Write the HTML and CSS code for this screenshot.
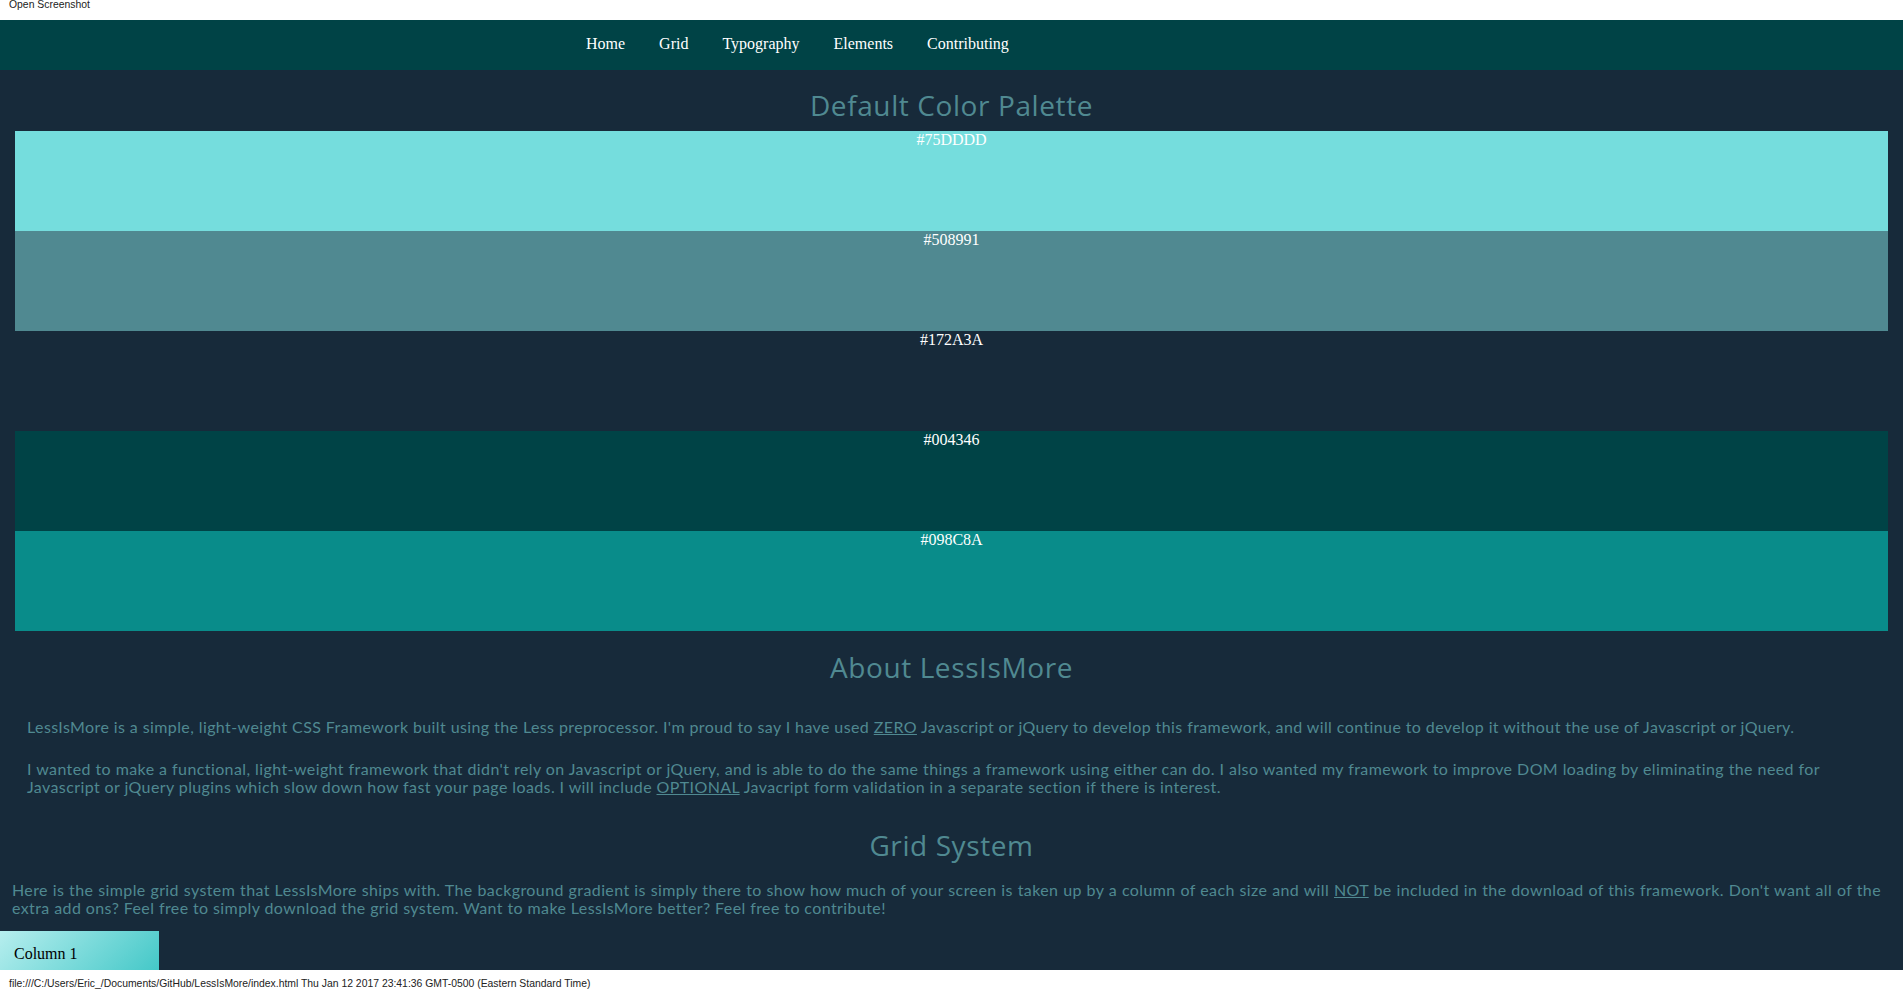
FILE: index.html
```html
<!DOCTYPE html>
<html>
<head>
<meta charset="utf-8">
<title>LessIsMore</title>
<link rel="stylesheet" href="styles.css">
</head>
<body>
<div class="shot-header">Open Screenshot</div>
<div class="page">
  <nav class="nav">
    <ul class="nav-list">
      <li><a href="#">Home</a></li>
      <li><a href="#">Grid</a></li>
      <li><a href="#">Typography</a></li>
      <li><a href="#">Elements</a></li>
      <li><a href="#">Contributing</a></li>
    </ul>
  </nav>
  <h1 class="heading palette-heading">Default Color Palette</h1>
  <div class="palette">
    <div class="swatch sw-1">#75DDDD</div>
    <div class="swatch sw-2">#508991</div>
    <div class="swatch sw-3">#172A3A</div>
    <div class="swatch sw-4">#004346</div>
    <div class="swatch sw-5">#098C8A</div>
  </div>
  <h2 class="heading about-heading">About LessIsMore</h2>
  <div class="about">
    <p>LessIsMore is a simple, light-weight CSS Framework built using the Less preprocessor. I'm proud to say I have used <u>ZERO</u> Javascript or jQuery to develop this framework, and will continue to develop it without the use of Javascript or jQuery.</p>
    <p>I wanted to make a functional, light-weight framework that didn't rely on Javascript or jQuery, and is able to do the same things a framework using either can do. I also wanted my framework to improve DOM loading by eliminating the need for Javascript or jQuery plugins which slow down how fast your page loads. I will include <u>OPTIONAL</u> Javacript form validation in a separate section if there is interest.</p>
  </div>
  <h2 class="heading grid-heading">Grid System</h2>
  <p class="grid-intro">Here is the simple grid system that LessIsMore ships with. The background gradient is simply there to show how much of your screen is taken up by a column of each size and will <u>NOT</u> be included in the download of this framework. Don't want all of the extra add ons? Feel free to simply download the grid system. Want to make LessIsMore better? Feel free to contribute!</p>
  <div class="grid-row">
    <div class="col col-1">Column 1</div>
  </div>
</div>
<div class="shot-footer">file:///C:/Users/Eric_/Documents/GitHub/LessIsMore/index.html Thu Jan 12 2017 23:41:36 GMT-0500 (Eastern Standard Time)</div>
</body>
</html>
```

FILE: styles.css
```css
html, body {
  margin: 0;
  padding: 0;
  height: 100%;
}
body {
  display: flex;
  flex-direction: column;
  height: 990px;
  overflow: hidden;
  background: #ffffff;
  font-family: "Liberation Serif", "Times New Roman", serif;
}
.shot-header, .shot-footer {
  flex: 0 0 20px;
  height: 20px;
  background: #ffffff;
  color: #222;
  font-family: "Liberation Sans", Arial, sans-serif;
  font-size: 10.4px;
  padding-left: 9px;
  box-sizing: border-box;
  white-space: nowrap;
}
.shot-header {
  line-height: 10px;
}
.shot-footer {
  padding-top: 8px;
  line-height: 12px;
}
.page {
  flex: 1 1 auto;
  overflow: hidden;
  background: #172A3A;
}
.nav {
  height: 50px;
  background: #004346;
}
.nav-list {
  list-style: none;
  margin: 0;
  padding: 0 0 2px 569px;
  box-sizing: border-box;
  display: flex;
  height: 50px;
  align-items: center;
}
.nav-list a {
  display: block;
  padding: 0 17px;
  color: #ffffff;
  text-decoration: none;
  font-family: "Liberation Serif", "Times New Roman", serif;
  font-size: 16px;
}
.heading {
  margin: 0;
  text-align: center;
  color: #508991;
  font-family: "Open Sans", sans-serif;
  font-weight: 400;
  font-size: 28px;
  letter-spacing: 0.6px;
  line-height: 38px;
}
.palette-heading {
  margin-top: 16px;
  height: 45px;
}
.palette {
  margin: 0 15px;
}
.swatch {
  height: 100px;
  color: #ffffff;
  text-align: center;
  font-size: 16px;
  line-height: 17px;
}
.sw-1 { background: #75DDDD; }
.sw-2 { background: #508991; }
.sw-3 { background: #172A3A; }
.sw-4 { background: #004346; }
.sw-5 { background: #098C8A; }
.about-heading {
  margin-top: 17px;
}
.about {
  padding: 0 83px 0 27px;
  margin-top: 32px;
}
.about p, .grid-intro {
  font-family: Lato, sans-serif;
  font-size: 16px;
  letter-spacing: 0.4px;
  line-height: 18px;
  color: #508991;
  text-align: justify;
  margin: 0 0 24px;
}
.about u, .grid-intro u {
  text-decoration: underline;
}
.grid-heading {
  margin-top: 30px;
}
.grid-intro {
  margin: 17px 22px 0 12px;
}
.grid-row {
  display: flex;
  margin-top: 14px;
}
.col-1 {
  width: 159px;
  height: 60px;
  background: linear-gradient(135deg, #b6eeee 0%, #38c4c4 100%);
  color: #000;
  font-size: 16px;
  padding: 14px 0 0 14px;
  box-sizing: border-box;
}
```
